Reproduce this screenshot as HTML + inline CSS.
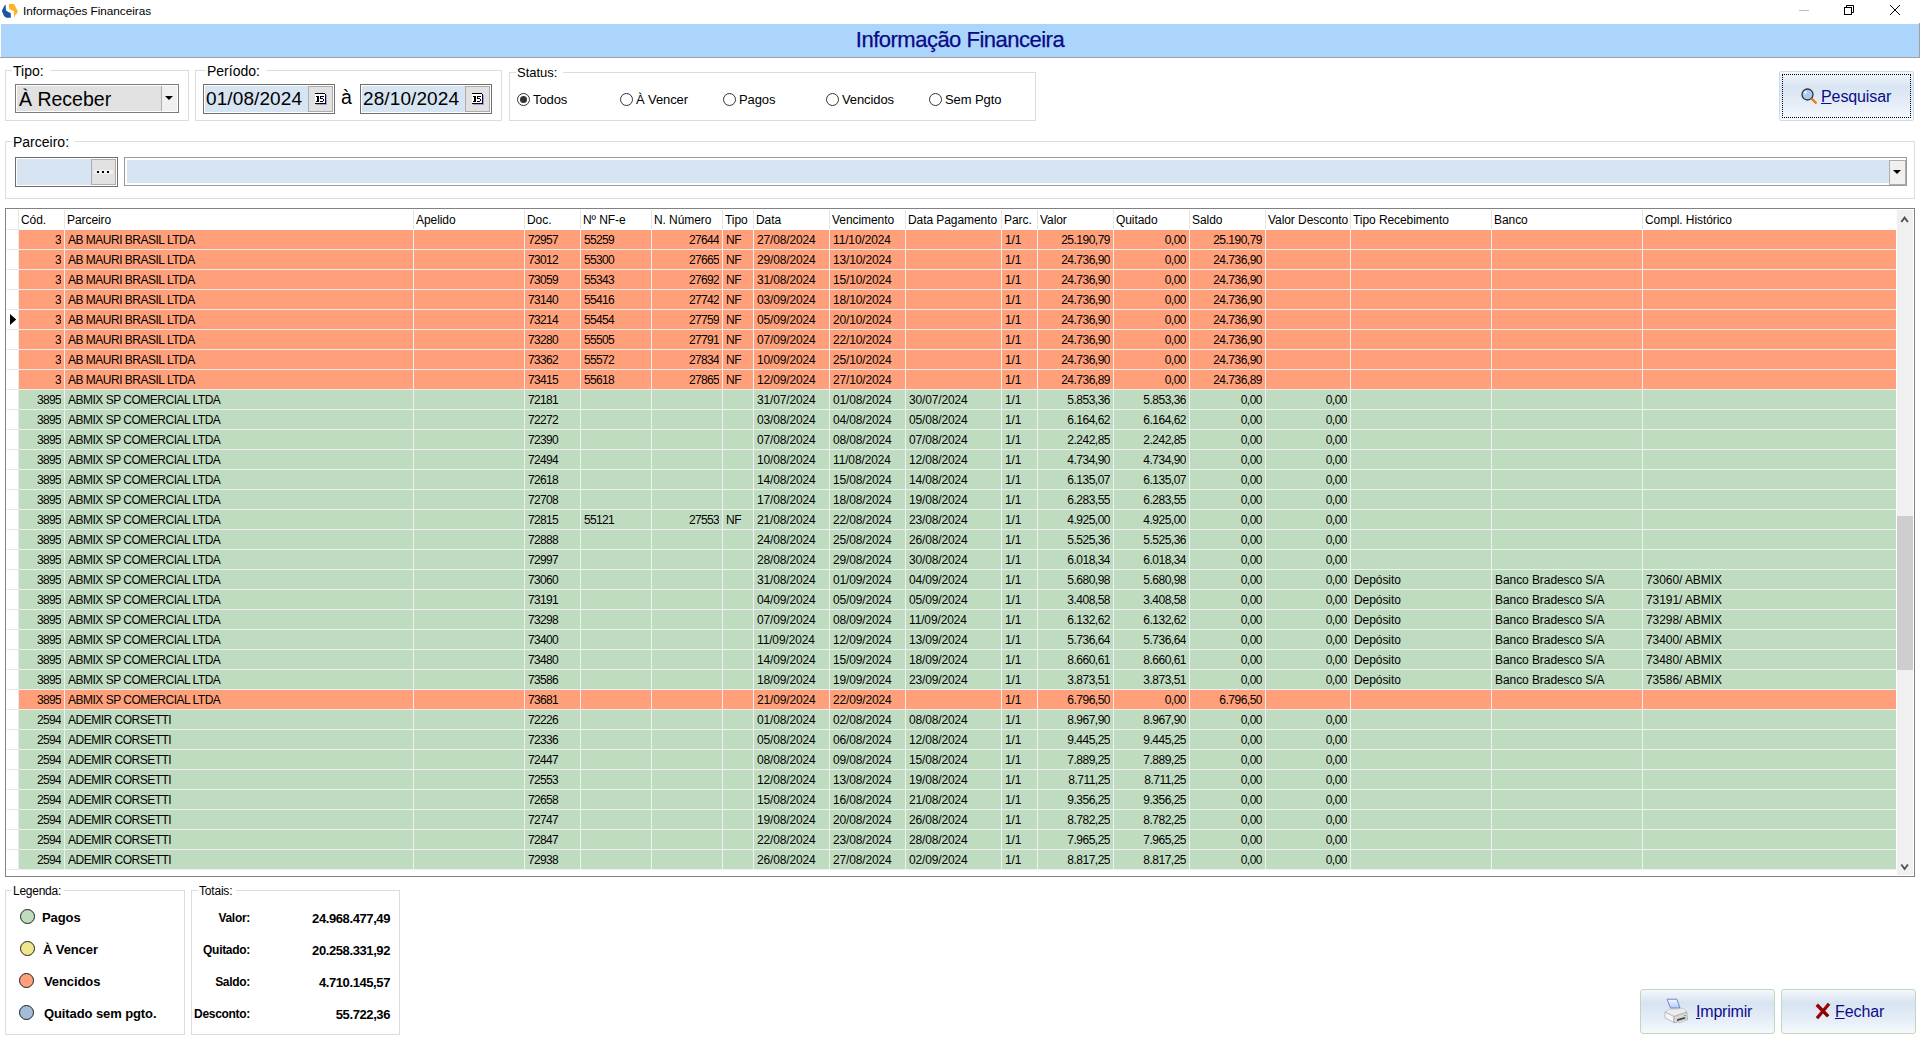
<!DOCTYPE html><html><head><meta charset="utf-8"><style>
*{margin:0;padding:0;box-sizing:border-box}
html,body{width:1920px;height:1040px;overflow:hidden;background:#fff;font-family:"Liberation Sans",sans-serif;color:#000;position:relative}
.a{position:absolute}
.t{position:absolute;white-space:nowrap;line-height:1}
.gb{position:absolute;border:1px solid #dcdcdc}
.gl{position:absolute;background:#fff;white-space:nowrap;line-height:1;padding:0 6px 0 1px}
.grid{position:absolute;left:5px;top:208px;width:1910px;height:669px;border:1px solid #828282;background:#fff;overflow:hidden}
.cell{position:absolute;height:19px;white-space:nowrap;overflow:hidden;font-size:12px;line-height:19px}
.hd{position:absolute;top:1px;height:20px;white-space:nowrap;overflow:hidden;font-size:12px;line-height:20px;letter-spacing:-0.07px}
.radio{position:absolute;width:13px;height:13px;border:1px solid #333;border-radius:50%;background:#fff}
</style></head><body>
<svg class="a" style="left:0;top:0" width="20" height="20" viewBox="0 0 20 20">
<path d="M5.7 4.6 L4.2 6 L3.2 8 L2 10.5 L2.2 12 L3 13.5 L4 16 L6.3 17.8 L10.8 17.8 L10.8 13.2 L8.5 12 L6.2 10.8 L5.8 9 Z" fill="#1a56a0"/>
<path d="M9 4 L13.8 4 L15 5.5 L16 8 L17.8 11 L17 13.5 L15.2 15 L14.8 16.8 L14 16.8 L14 11.5 L12 10.2 L10 9.6 L9 8.5 Z" fill="#fbb424"/>
</svg>
<div class="t" style="left:23px;top:6px;font-size:11.8px;letter-spacing:-0.05px;color:#000">Informações Financeiras</div>
<div class="a" style="left:1799px;top:10px;width:10px;height:1px;background:#bbb"></div>
<svg class="a" style="left:1843px;top:4px" width="12" height="12" viewBox="0 0 12 12"><rect x="1.5" y="3.5" width="7" height="7" fill="none" stroke="#000"/><path d="M3.5 3.5 V1.5 H10.5 V8.5 H8.5" fill="none" stroke="#000"/></svg>
<svg class="a" style="left:1889px;top:4px" width="12" height="12" viewBox="0 0 12 12"><path d="M1 1 L11 11 M11 1 L1 11" stroke="#000" stroke-width="1"/></svg>
<div class="a" style="left:1px;top:24px;width:1918px;height:33px;background:#acd5fb"></div>
<div class="a" style="left:0;top:57px;width:1920px;height:1px;background:#a0a0a0"></div>
<div class="a" style="left:1919px;top:23px;width:1px;height:35px;background:#a0a0a0"></div>
<div class="t" style="left:0;width:1920px;text-align:center;top:29px;font-size:22px;letter-spacing:-0.5px;color:#0a0a86;-webkit-text-stroke:0.25px #0a0a86">Informação Financeira</div>
<div class="gb" style="left:5px;top:70px;width:184px;height:51px"></div>
<div class="gl" style="left:12px;top:64px;font-size:14px">Tipo:</div>
<div class="a" style="left:15px;top:84px;width:164px;height:29px;border:1px solid #7a7a7a;background:#fff;padding:1px"><div style="width:100%;height:100%;background:#e1e1e1"></div></div>
<div class="a" style="left:161px;top:86px;width:16px;height:25px;background:#f0f0f0;border-left:1px solid #adadad"></div>
<svg class="a" style="left:165px;top:96px" width="9" height="5" viewBox="0 0 9 5"><path d="M0 0 H8 L4 4 Z" fill="#000"/></svg>
<div class="t" style="left:19px;top:90px;font-size:19.5px">À Receber</div>
<div class="gb" style="left:195px;top:70px;width:307px;height:51px"></div>
<div class="gl" style="left:206px;top:64px;font-size:14px">Período:</div>
<div class="a" style="left:203px;top:84px;width:132px;height:30px;border:1px solid #6e6e6e;background:#fff;padding:1px"><div style="width:100%;height:100%;background:#d7e4f2"></div></div>
<div class="a" style="left:308px;top:86px;width:25px;height:26px;background:#e1e1e1;border:1px solid #adadad"></div>
<svg class="a" style="left:315px;top:93px" width="13" height="13" viewBox="0 0 13 13" shape-rendering="crispEdges"><rect x="11" y="2" width="1" height="10" fill="#a8a8a8"/><rect x="1" y="11" width="11" height="1" fill="#a8a8a8"/><rect x="0" y="1" width="10" height="9" fill="#fff"/><rect x="0" y="0" width="10" height="1" fill="#000"/><rect x="10" y="1" width="1" height="10" fill="#00008b"/><rect x="0" y="10" width="11" height="1" fill="#000"/><rect x="2" y="10" width="1" height="1" fill="#00008b"/><rect x="4" y="10" width="1" height="1" fill="#00008b"/><rect x="6" y="10" width="1" height="1" fill="#00008b"/><rect x="8" y="10" width="1" height="1" fill="#00008b"/>
<rect x="1" y="3" width="1" height="1" fill="#000"/><rect x="2" y="3" width="2" height="6" fill="#000"/><rect x="1" y="8" width="3" height="1" fill="#000"/>
<rect x="5" y="3" width="4" height="1" fill="#000"/><rect x="5" y="4" width="1" height="2" fill="#000"/><rect x="5" y="5" width="3" height="1" fill="#000"/><rect x="8" y="6" width="1" height="2" fill="#000"/><rect x="5" y="8" width="3" height="1" fill="#000"/></svg>
<div class="t" style="left:206px;top:89px;font-size:19px;letter-spacing:0.1px">01/08/2024</div>
<div class="a" style="left:360px;top:84px;width:132px;height:30px;border:1px solid #6e6e6e;background:#fff;padding:1px"><div style="width:100%;height:100%;background:#d7e4f2"></div></div>
<div class="a" style="left:465px;top:86px;width:25px;height:26px;background:#e1e1e1;border:1px solid #adadad"></div>
<svg class="a" style="left:472px;top:93px" width="13" height="13" viewBox="0 0 13 13" shape-rendering="crispEdges"><rect x="11" y="2" width="1" height="10" fill="#a8a8a8"/><rect x="1" y="11" width="11" height="1" fill="#a8a8a8"/><rect x="0" y="1" width="10" height="9" fill="#fff"/><rect x="0" y="0" width="10" height="1" fill="#000"/><rect x="10" y="1" width="1" height="10" fill="#00008b"/><rect x="0" y="10" width="11" height="1" fill="#000"/><rect x="2" y="10" width="1" height="1" fill="#00008b"/><rect x="4" y="10" width="1" height="1" fill="#00008b"/><rect x="6" y="10" width="1" height="1" fill="#00008b"/><rect x="8" y="10" width="1" height="1" fill="#00008b"/>
<rect x="1" y="3" width="1" height="1" fill="#000"/><rect x="2" y="3" width="2" height="6" fill="#000"/><rect x="1" y="8" width="3" height="1" fill="#000"/>
<rect x="5" y="3" width="4" height="1" fill="#000"/><rect x="5" y="4" width="1" height="2" fill="#000"/><rect x="5" y="5" width="3" height="1" fill="#000"/><rect x="8" y="6" width="1" height="2" fill="#000"/><rect x="5" y="8" width="3" height="1" fill="#000"/></svg>
<div class="t" style="left:363px;top:89px;font-size:19px;letter-spacing:0.1px">28/10/2024</div>
<div class="t" style="left:341px;top:88px;font-size:19.5px">à</div>
<div class="gb" style="left:509px;top:72px;width:527px;height:49px"></div>
<div class="gl" style="left:516px;top:66px;font-size:13px">Status:</div>
<div class="radio" style="left:517px;top:93px"></div>
<div class="a" style="left:520px;top:96px;width:7px;height:7px;border-radius:50%;background:#333"></div>
<div class="t" style="left:533px;top:93px;font-size:13px;letter-spacing:-0.1px">Todos</div>
<div class="radio" style="left:620px;top:93px"></div>
<div class="t" style="left:636px;top:93px;font-size:13px;letter-spacing:-0.1px">À Vencer</div>
<div class="radio" style="left:723px;top:93px"></div>
<div class="t" style="left:739px;top:93px;font-size:13px;letter-spacing:-0.1px">Pagos</div>
<div class="radio" style="left:826px;top:93px"></div>
<div class="t" style="left:842px;top:93px;font-size:13px;letter-spacing:-0.1px">Vencidos</div>
<div class="radio" style="left:929px;top:93px"></div>
<div class="t" style="left:945px;top:93px;font-size:13px;letter-spacing:-0.1px">Sem Pgto</div>
<div class="a" style="left:1779px;top:71px;width:135px;height:50px;border:1px solid #c9dcf2;border-radius:2px;background:linear-gradient(#f5f8fc 0%,#d9e5f3 30%,#e3ebf6 60%,#f6f9fd 100%)"></div>
<div class="a" style="left:1782px;top:74px;width:129px;height:44px;border:1px dotted #000"></div>
<svg class="a" style="left:1800px;top:87px" width="20" height="20" viewBox="0 0 20 20"><circle cx="7.5" cy="7.5" r="5.5" fill="#a9cdf2" stroke="#333" stroke-width="1.3"/><circle cx="5.5" cy="5.5" r="1.2" fill="#fff"/><path d="M11.5 11.5 L16.5 16.5" stroke="#e07b10" stroke-width="2.2"/></svg>
<div class="t" style="left:1821px;top:89px;font-size:16px;color:#0c0c8a;letter-spacing:-0.1px"><span style="text-decoration:underline">P</span>esquisar</div>
<div class="gb" style="left:5px;top:141px;width:1910px;height:58px"></div>
<div class="gl" style="left:12px;top:135px;font-size:14px">Parceiro:</div>
<div class="a" style="left:15px;top:157px;width:103px;height:30px;border:1px solid #6e6e6e;background:#fff;padding:1px"><div style="width:100%;height:100%;background:#d7e4f2"></div></div>
<div class="a" style="left:91px;top:159px;width:25px;height:26px;background:#e1e1e1;border:1px solid #adadad"></div>
<div class="a" style="left:94px;top:170px;width:19px;height:4px;background:#f0f0f0"></div>
<div class="a" style="left:97px;top:171px;width:2px;height:2px;background:#000"></div>
<div class="a" style="left:102px;top:171px;width:2px;height:2px;background:#000"></div>
<div class="a" style="left:107px;top:171px;width:2px;height:2px;background:#000"></div>
<div class="a" style="left:124px;top:157px;width:1783px;height:29px;border:1px solid #9a9a9a;background:#fff;padding:2px"><div style="width:100%;height:100%;background:#d7e4f2"></div></div>
<div class="a" style="left:1889px;top:160px;width:17px;height:25px;background:#f0f0f0;border:1px solid #adadad"></div>
<svg class="a" style="left:1893px;top:170px" width="9" height="5" viewBox="0 0 9 5"><path d="M0 0 H8 L4 4 Z" fill="#000"/></svg>
<div class="grid">
<div class="a" style="left:12px;top:1px;width:1px;height:19px;background:#e5e5e5"></div>
<div class="a" style="left:58px;top:1px;width:1px;height:19px;background:#e5e5e5"></div>
<div class="a" style="left:407px;top:1px;width:1px;height:19px;background:#e5e5e5"></div>
<div class="a" style="left:518px;top:1px;width:1px;height:19px;background:#e5e5e5"></div>
<div class="a" style="left:574px;top:1px;width:1px;height:19px;background:#e5e5e5"></div>
<div class="a" style="left:645px;top:1px;width:1px;height:19px;background:#e5e5e5"></div>
<div class="a" style="left:716px;top:1px;width:1px;height:19px;background:#e5e5e5"></div>
<div class="a" style="left:747px;top:1px;width:1px;height:19px;background:#e5e5e5"></div>
<div class="a" style="left:823px;top:1px;width:1px;height:19px;background:#e5e5e5"></div>
<div class="a" style="left:899px;top:1px;width:1px;height:19px;background:#e5e5e5"></div>
<div class="a" style="left:995px;top:1px;width:1px;height:19px;background:#e5e5e5"></div>
<div class="a" style="left:1031px;top:1px;width:1px;height:19px;background:#e5e5e5"></div>
<div class="a" style="left:1107px;top:1px;width:1px;height:19px;background:#e5e5e5"></div>
<div class="a" style="left:1183px;top:1px;width:1px;height:19px;background:#e5e5e5"></div>
<div class="a" style="left:1259px;top:1px;width:1px;height:19px;background:#e5e5e5"></div>
<div class="a" style="left:1344px;top:1px;width:1px;height:19px;background:#e5e5e5"></div>
<div class="a" style="left:1485px;top:1px;width:1px;height:19px;background:#e5e5e5"></div>
<div class="a" style="left:1636px;top:1px;width:1px;height:19px;background:#e5e5e5"></div>
<div class="hd" style="left:15px;width:43px">Cód.</div>
<div class="hd" style="left:61px;width:346px">Parceiro</div>
<div class="hd" style="left:410px;width:108px">Apelido</div>
<div class="hd" style="left:521px;width:53px">Doc.</div>
<div class="hd" style="left:577px;width:68px">Nº NF-e</div>
<div class="hd" style="left:648px;width:68px">N. Número</div>
<div class="hd" style="left:719px;width:28px">Tipo</div>
<div class="hd" style="left:750px;width:73px">Data</div>
<div class="hd" style="left:826px;width:73px">Vencimento</div>
<div class="hd" style="left:902px;width:93px">Data Pagamento</div>
<div class="hd" style="left:998px;width:33px">Parc.</div>
<div class="hd" style="left:1034px;width:73px">Valor</div>
<div class="hd" style="left:1110px;width:73px">Quitado</div>
<div class="hd" style="left:1186px;width:73px">Saldo</div>
<div class="hd" style="left:1262px;width:82px">Valor Desconto</div>
<div class="hd" style="left:1347px;width:138px">Tipo Recebimento</div>
<div class="hd" style="left:1488px;width:148px">Banco</div>
<div class="hd" style="left:1639px;width:251px">Compl. Histórico</div>
<div class="a" style="left:1px;top:20px;width:12px;height:1px;background:#e5e5e5"></div>
<div class="a" style="left:1px;top:40px;width:12px;height:1px;background:#e5e5e5"></div>
<div class="a" style="left:13px;top:21px;width:1877px;height:19px;background:#ffa07a"></div>
<div class="a" style="left:13px;top:40px;width:1877px;height:1px;background:#f0f0f0"></div>
<div class="cell" style="left:13px;top:22px;width:42px;text-align:right;letter-spacing:-0.67px">3</div>
<div class="cell" style="left:62px;top:22px;width:345px;letter-spacing:-0.5px">AB MAURI BRASIL LTDA</div>
<div class="cell" style="left:522px;top:22px;width:52px;letter-spacing:-0.67px">72957</div>
<div class="cell" style="left:578px;top:22px;width:67px;letter-spacing:-0.67px">55259</div>
<div class="cell" style="left:646px;top:22px;width:67px;text-align:right;letter-spacing:-0.67px">27644</div>
<div class="cell" style="left:720px;top:22px;width:27px;letter-spacing:-0.5px">NF</div>
<div class="cell" style="left:751px;top:22px;width:72px;letter-spacing:-0.14px">27/08/2024</div>
<div class="cell" style="left:827px;top:22px;width:72px;letter-spacing:-0.14px">11/10/2024</div>
<div class="cell" style="left:999px;top:22px;width:32px;letter-spacing:-0.07px">1/1</div>
<div class="cell" style="left:1032px;top:22px;width:72px;text-align:right;letter-spacing:-0.51px">25.190,79</div>
<div class="cell" style="left:1108px;top:22px;width:72px;text-align:right;letter-spacing:-0.51px">0,00</div>
<div class="cell" style="left:1184px;top:22px;width:72px;text-align:right;letter-spacing:-0.51px">25.190,79</div>
<div class="a" style="left:1px;top:60px;width:12px;height:1px;background:#e5e5e5"></div>
<div class="a" style="left:13px;top:41px;width:1877px;height:19px;background:#ffa07a"></div>
<div class="a" style="left:13px;top:60px;width:1877px;height:1px;background:#f0f0f0"></div>
<div class="cell" style="left:13px;top:42px;width:42px;text-align:right;letter-spacing:-0.67px">3</div>
<div class="cell" style="left:62px;top:42px;width:345px;letter-spacing:-0.5px">AB MAURI BRASIL LTDA</div>
<div class="cell" style="left:522px;top:42px;width:52px;letter-spacing:-0.67px">73012</div>
<div class="cell" style="left:578px;top:42px;width:67px;letter-spacing:-0.67px">55300</div>
<div class="cell" style="left:646px;top:42px;width:67px;text-align:right;letter-spacing:-0.67px">27665</div>
<div class="cell" style="left:720px;top:42px;width:27px;letter-spacing:-0.5px">NF</div>
<div class="cell" style="left:751px;top:42px;width:72px;letter-spacing:-0.14px">29/08/2024</div>
<div class="cell" style="left:827px;top:42px;width:72px;letter-spacing:-0.14px">13/10/2024</div>
<div class="cell" style="left:999px;top:42px;width:32px;letter-spacing:-0.07px">1/1</div>
<div class="cell" style="left:1032px;top:42px;width:72px;text-align:right;letter-spacing:-0.51px">24.736,90</div>
<div class="cell" style="left:1108px;top:42px;width:72px;text-align:right;letter-spacing:-0.51px">0,00</div>
<div class="cell" style="left:1184px;top:42px;width:72px;text-align:right;letter-spacing:-0.51px">24.736,90</div>
<div class="a" style="left:1px;top:80px;width:12px;height:1px;background:#e5e5e5"></div>
<div class="a" style="left:13px;top:61px;width:1877px;height:19px;background:#ffa07a"></div>
<div class="a" style="left:13px;top:80px;width:1877px;height:1px;background:#f0f0f0"></div>
<div class="cell" style="left:13px;top:62px;width:42px;text-align:right;letter-spacing:-0.67px">3</div>
<div class="cell" style="left:62px;top:62px;width:345px;letter-spacing:-0.5px">AB MAURI BRASIL LTDA</div>
<div class="cell" style="left:522px;top:62px;width:52px;letter-spacing:-0.67px">73059</div>
<div class="cell" style="left:578px;top:62px;width:67px;letter-spacing:-0.67px">55343</div>
<div class="cell" style="left:646px;top:62px;width:67px;text-align:right;letter-spacing:-0.67px">27692</div>
<div class="cell" style="left:720px;top:62px;width:27px;letter-spacing:-0.5px">NF</div>
<div class="cell" style="left:751px;top:62px;width:72px;letter-spacing:-0.14px">31/08/2024</div>
<div class="cell" style="left:827px;top:62px;width:72px;letter-spacing:-0.14px">15/10/2024</div>
<div class="cell" style="left:999px;top:62px;width:32px;letter-spacing:-0.07px">1/1</div>
<div class="cell" style="left:1032px;top:62px;width:72px;text-align:right;letter-spacing:-0.51px">24.736,90</div>
<div class="cell" style="left:1108px;top:62px;width:72px;text-align:right;letter-spacing:-0.51px">0,00</div>
<div class="cell" style="left:1184px;top:62px;width:72px;text-align:right;letter-spacing:-0.51px">24.736,90</div>
<div class="a" style="left:1px;top:100px;width:12px;height:1px;background:#e5e5e5"></div>
<div class="a" style="left:13px;top:81px;width:1877px;height:19px;background:#ffa07a"></div>
<div class="a" style="left:13px;top:100px;width:1877px;height:1px;background:#f0f0f0"></div>
<div class="cell" style="left:13px;top:82px;width:42px;text-align:right;letter-spacing:-0.67px">3</div>
<div class="cell" style="left:62px;top:82px;width:345px;letter-spacing:-0.5px">AB MAURI BRASIL LTDA</div>
<div class="cell" style="left:522px;top:82px;width:52px;letter-spacing:-0.67px">73140</div>
<div class="cell" style="left:578px;top:82px;width:67px;letter-spacing:-0.67px">55416</div>
<div class="cell" style="left:646px;top:82px;width:67px;text-align:right;letter-spacing:-0.67px">27742</div>
<div class="cell" style="left:720px;top:82px;width:27px;letter-spacing:-0.5px">NF</div>
<div class="cell" style="left:751px;top:82px;width:72px;letter-spacing:-0.14px">03/09/2024</div>
<div class="cell" style="left:827px;top:82px;width:72px;letter-spacing:-0.14px">18/10/2024</div>
<div class="cell" style="left:999px;top:82px;width:32px;letter-spacing:-0.07px">1/1</div>
<div class="cell" style="left:1032px;top:82px;width:72px;text-align:right;letter-spacing:-0.51px">24.736,90</div>
<div class="cell" style="left:1108px;top:82px;width:72px;text-align:right;letter-spacing:-0.51px">0,00</div>
<div class="cell" style="left:1184px;top:82px;width:72px;text-align:right;letter-spacing:-0.51px">24.736,90</div>
<div class="a" style="left:1px;top:120px;width:12px;height:1px;background:#e5e5e5"></div>
<div class="a" style="left:13px;top:101px;width:1877px;height:19px;background:#ffa07a"></div>
<div class="a" style="left:13px;top:120px;width:1877px;height:1px;background:#f0f0f0"></div>
<div class="cell" style="left:13px;top:102px;width:42px;text-align:right;letter-spacing:-0.67px">3</div>
<div class="cell" style="left:62px;top:102px;width:345px;letter-spacing:-0.5px">AB MAURI BRASIL LTDA</div>
<div class="cell" style="left:522px;top:102px;width:52px;letter-spacing:-0.67px">73214</div>
<div class="cell" style="left:578px;top:102px;width:67px;letter-spacing:-0.67px">55454</div>
<div class="cell" style="left:646px;top:102px;width:67px;text-align:right;letter-spacing:-0.67px">27759</div>
<div class="cell" style="left:720px;top:102px;width:27px;letter-spacing:-0.5px">NF</div>
<div class="cell" style="left:751px;top:102px;width:72px;letter-spacing:-0.14px">05/09/2024</div>
<div class="cell" style="left:827px;top:102px;width:72px;letter-spacing:-0.14px">20/10/2024</div>
<div class="cell" style="left:999px;top:102px;width:32px;letter-spacing:-0.07px">1/1</div>
<div class="cell" style="left:1032px;top:102px;width:72px;text-align:right;letter-spacing:-0.51px">24.736,90</div>
<div class="cell" style="left:1108px;top:102px;width:72px;text-align:right;letter-spacing:-0.51px">0,00</div>
<div class="cell" style="left:1184px;top:102px;width:72px;text-align:right;letter-spacing:-0.51px">24.736,90</div>
<div class="a" style="left:1px;top:140px;width:12px;height:1px;background:#e5e5e5"></div>
<div class="a" style="left:13px;top:121px;width:1877px;height:19px;background:#ffa07a"></div>
<div class="a" style="left:13px;top:140px;width:1877px;height:1px;background:#f0f0f0"></div>
<div class="cell" style="left:13px;top:122px;width:42px;text-align:right;letter-spacing:-0.67px">3</div>
<div class="cell" style="left:62px;top:122px;width:345px;letter-spacing:-0.5px">AB MAURI BRASIL LTDA</div>
<div class="cell" style="left:522px;top:122px;width:52px;letter-spacing:-0.67px">73280</div>
<div class="cell" style="left:578px;top:122px;width:67px;letter-spacing:-0.67px">55505</div>
<div class="cell" style="left:646px;top:122px;width:67px;text-align:right;letter-spacing:-0.67px">27791</div>
<div class="cell" style="left:720px;top:122px;width:27px;letter-spacing:-0.5px">NF</div>
<div class="cell" style="left:751px;top:122px;width:72px;letter-spacing:-0.14px">07/09/2024</div>
<div class="cell" style="left:827px;top:122px;width:72px;letter-spacing:-0.14px">22/10/2024</div>
<div class="cell" style="left:999px;top:122px;width:32px;letter-spacing:-0.07px">1/1</div>
<div class="cell" style="left:1032px;top:122px;width:72px;text-align:right;letter-spacing:-0.51px">24.736,90</div>
<div class="cell" style="left:1108px;top:122px;width:72px;text-align:right;letter-spacing:-0.51px">0,00</div>
<div class="cell" style="left:1184px;top:122px;width:72px;text-align:right;letter-spacing:-0.51px">24.736,90</div>
<div class="a" style="left:1px;top:160px;width:12px;height:1px;background:#e5e5e5"></div>
<div class="a" style="left:13px;top:141px;width:1877px;height:19px;background:#ffa07a"></div>
<div class="a" style="left:13px;top:160px;width:1877px;height:1px;background:#f0f0f0"></div>
<div class="cell" style="left:13px;top:142px;width:42px;text-align:right;letter-spacing:-0.67px">3</div>
<div class="cell" style="left:62px;top:142px;width:345px;letter-spacing:-0.5px">AB MAURI BRASIL LTDA</div>
<div class="cell" style="left:522px;top:142px;width:52px;letter-spacing:-0.67px">73362</div>
<div class="cell" style="left:578px;top:142px;width:67px;letter-spacing:-0.67px">55572</div>
<div class="cell" style="left:646px;top:142px;width:67px;text-align:right;letter-spacing:-0.67px">27834</div>
<div class="cell" style="left:720px;top:142px;width:27px;letter-spacing:-0.5px">NF</div>
<div class="cell" style="left:751px;top:142px;width:72px;letter-spacing:-0.14px">10/09/2024</div>
<div class="cell" style="left:827px;top:142px;width:72px;letter-spacing:-0.14px">25/10/2024</div>
<div class="cell" style="left:999px;top:142px;width:32px;letter-spacing:-0.07px">1/1</div>
<div class="cell" style="left:1032px;top:142px;width:72px;text-align:right;letter-spacing:-0.51px">24.736,90</div>
<div class="cell" style="left:1108px;top:142px;width:72px;text-align:right;letter-spacing:-0.51px">0,00</div>
<div class="cell" style="left:1184px;top:142px;width:72px;text-align:right;letter-spacing:-0.51px">24.736,90</div>
<div class="a" style="left:1px;top:180px;width:12px;height:1px;background:#e5e5e5"></div>
<div class="a" style="left:13px;top:161px;width:1877px;height:19px;background:#ffa07a"></div>
<div class="a" style="left:13px;top:180px;width:1877px;height:1px;background:#f0f0f0"></div>
<div class="cell" style="left:13px;top:162px;width:42px;text-align:right;letter-spacing:-0.67px">3</div>
<div class="cell" style="left:62px;top:162px;width:345px;letter-spacing:-0.5px">AB MAURI BRASIL LTDA</div>
<div class="cell" style="left:522px;top:162px;width:52px;letter-spacing:-0.67px">73415</div>
<div class="cell" style="left:578px;top:162px;width:67px;letter-spacing:-0.67px">55618</div>
<div class="cell" style="left:646px;top:162px;width:67px;text-align:right;letter-spacing:-0.67px">27865</div>
<div class="cell" style="left:720px;top:162px;width:27px;letter-spacing:-0.5px">NF</div>
<div class="cell" style="left:751px;top:162px;width:72px;letter-spacing:-0.14px">12/09/2024</div>
<div class="cell" style="left:827px;top:162px;width:72px;letter-spacing:-0.14px">27/10/2024</div>
<div class="cell" style="left:999px;top:162px;width:32px;letter-spacing:-0.07px">1/1</div>
<div class="cell" style="left:1032px;top:162px;width:72px;text-align:right;letter-spacing:-0.51px">24.736,89</div>
<div class="cell" style="left:1108px;top:162px;width:72px;text-align:right;letter-spacing:-0.51px">0,00</div>
<div class="cell" style="left:1184px;top:162px;width:72px;text-align:right;letter-spacing:-0.51px">24.736,89</div>
<div class="a" style="left:1px;top:200px;width:12px;height:1px;background:#e5e5e5"></div>
<div class="a" style="left:13px;top:181px;width:1877px;height:19px;background:#c0dcc0"></div>
<div class="a" style="left:13px;top:200px;width:1877px;height:1px;background:#f0f0f0"></div>
<div class="cell" style="left:13px;top:182px;width:42px;text-align:right;letter-spacing:-0.67px">3895</div>
<div class="cell" style="left:62px;top:182px;width:345px;letter-spacing:-0.5px">ABMIX SP COMERCIAL LTDA</div>
<div class="cell" style="left:522px;top:182px;width:52px;letter-spacing:-0.67px">72181</div>
<div class="cell" style="left:751px;top:182px;width:72px;letter-spacing:-0.14px">31/07/2024</div>
<div class="cell" style="left:827px;top:182px;width:72px;letter-spacing:-0.14px">01/08/2024</div>
<div class="cell" style="left:903px;top:182px;width:92px;letter-spacing:-0.14px">30/07/2024</div>
<div class="cell" style="left:999px;top:182px;width:32px;letter-spacing:-0.07px">1/1</div>
<div class="cell" style="left:1032px;top:182px;width:72px;text-align:right;letter-spacing:-0.51px">5.853,36</div>
<div class="cell" style="left:1108px;top:182px;width:72px;text-align:right;letter-spacing:-0.51px">5.853,36</div>
<div class="cell" style="left:1184px;top:182px;width:72px;text-align:right;letter-spacing:-0.51px">0,00</div>
<div class="cell" style="left:1260px;top:182px;width:81px;text-align:right;letter-spacing:-0.51px">0,00</div>
<div class="a" style="left:1px;top:220px;width:12px;height:1px;background:#e5e5e5"></div>
<div class="a" style="left:13px;top:201px;width:1877px;height:19px;background:#c0dcc0"></div>
<div class="a" style="left:13px;top:220px;width:1877px;height:1px;background:#f0f0f0"></div>
<div class="cell" style="left:13px;top:202px;width:42px;text-align:right;letter-spacing:-0.67px">3895</div>
<div class="cell" style="left:62px;top:202px;width:345px;letter-spacing:-0.5px">ABMIX SP COMERCIAL LTDA</div>
<div class="cell" style="left:522px;top:202px;width:52px;letter-spacing:-0.67px">72272</div>
<div class="cell" style="left:751px;top:202px;width:72px;letter-spacing:-0.14px">03/08/2024</div>
<div class="cell" style="left:827px;top:202px;width:72px;letter-spacing:-0.14px">04/08/2024</div>
<div class="cell" style="left:903px;top:202px;width:92px;letter-spacing:-0.14px">05/08/2024</div>
<div class="cell" style="left:999px;top:202px;width:32px;letter-spacing:-0.07px">1/1</div>
<div class="cell" style="left:1032px;top:202px;width:72px;text-align:right;letter-spacing:-0.51px">6.164,62</div>
<div class="cell" style="left:1108px;top:202px;width:72px;text-align:right;letter-spacing:-0.51px">6.164,62</div>
<div class="cell" style="left:1184px;top:202px;width:72px;text-align:right;letter-spacing:-0.51px">0,00</div>
<div class="cell" style="left:1260px;top:202px;width:81px;text-align:right;letter-spacing:-0.51px">0,00</div>
<div class="a" style="left:1px;top:240px;width:12px;height:1px;background:#e5e5e5"></div>
<div class="a" style="left:13px;top:221px;width:1877px;height:19px;background:#c0dcc0"></div>
<div class="a" style="left:13px;top:240px;width:1877px;height:1px;background:#f0f0f0"></div>
<div class="cell" style="left:13px;top:222px;width:42px;text-align:right;letter-spacing:-0.67px">3895</div>
<div class="cell" style="left:62px;top:222px;width:345px;letter-spacing:-0.5px">ABMIX SP COMERCIAL LTDA</div>
<div class="cell" style="left:522px;top:222px;width:52px;letter-spacing:-0.67px">72390</div>
<div class="cell" style="left:751px;top:222px;width:72px;letter-spacing:-0.14px">07/08/2024</div>
<div class="cell" style="left:827px;top:222px;width:72px;letter-spacing:-0.14px">08/08/2024</div>
<div class="cell" style="left:903px;top:222px;width:92px;letter-spacing:-0.14px">07/08/2024</div>
<div class="cell" style="left:999px;top:222px;width:32px;letter-spacing:-0.07px">1/1</div>
<div class="cell" style="left:1032px;top:222px;width:72px;text-align:right;letter-spacing:-0.51px">2.242,85</div>
<div class="cell" style="left:1108px;top:222px;width:72px;text-align:right;letter-spacing:-0.51px">2.242,85</div>
<div class="cell" style="left:1184px;top:222px;width:72px;text-align:right;letter-spacing:-0.51px">0,00</div>
<div class="cell" style="left:1260px;top:222px;width:81px;text-align:right;letter-spacing:-0.51px">0,00</div>
<div class="a" style="left:1px;top:260px;width:12px;height:1px;background:#e5e5e5"></div>
<div class="a" style="left:13px;top:241px;width:1877px;height:19px;background:#c0dcc0"></div>
<div class="a" style="left:13px;top:260px;width:1877px;height:1px;background:#f0f0f0"></div>
<div class="cell" style="left:13px;top:242px;width:42px;text-align:right;letter-spacing:-0.67px">3895</div>
<div class="cell" style="left:62px;top:242px;width:345px;letter-spacing:-0.5px">ABMIX SP COMERCIAL LTDA</div>
<div class="cell" style="left:522px;top:242px;width:52px;letter-spacing:-0.67px">72494</div>
<div class="cell" style="left:751px;top:242px;width:72px;letter-spacing:-0.14px">10/08/2024</div>
<div class="cell" style="left:827px;top:242px;width:72px;letter-spacing:-0.14px">11/08/2024</div>
<div class="cell" style="left:903px;top:242px;width:92px;letter-spacing:-0.14px">12/08/2024</div>
<div class="cell" style="left:999px;top:242px;width:32px;letter-spacing:-0.07px">1/1</div>
<div class="cell" style="left:1032px;top:242px;width:72px;text-align:right;letter-spacing:-0.51px">4.734,90</div>
<div class="cell" style="left:1108px;top:242px;width:72px;text-align:right;letter-spacing:-0.51px">4.734,90</div>
<div class="cell" style="left:1184px;top:242px;width:72px;text-align:right;letter-spacing:-0.51px">0,00</div>
<div class="cell" style="left:1260px;top:242px;width:81px;text-align:right;letter-spacing:-0.51px">0,00</div>
<div class="a" style="left:1px;top:280px;width:12px;height:1px;background:#e5e5e5"></div>
<div class="a" style="left:13px;top:261px;width:1877px;height:19px;background:#c0dcc0"></div>
<div class="a" style="left:13px;top:280px;width:1877px;height:1px;background:#f0f0f0"></div>
<div class="cell" style="left:13px;top:262px;width:42px;text-align:right;letter-spacing:-0.67px">3895</div>
<div class="cell" style="left:62px;top:262px;width:345px;letter-spacing:-0.5px">ABMIX SP COMERCIAL LTDA</div>
<div class="cell" style="left:522px;top:262px;width:52px;letter-spacing:-0.67px">72618</div>
<div class="cell" style="left:751px;top:262px;width:72px;letter-spacing:-0.14px">14/08/2024</div>
<div class="cell" style="left:827px;top:262px;width:72px;letter-spacing:-0.14px">15/08/2024</div>
<div class="cell" style="left:903px;top:262px;width:92px;letter-spacing:-0.14px">14/08/2024</div>
<div class="cell" style="left:999px;top:262px;width:32px;letter-spacing:-0.07px">1/1</div>
<div class="cell" style="left:1032px;top:262px;width:72px;text-align:right;letter-spacing:-0.51px">6.135,07</div>
<div class="cell" style="left:1108px;top:262px;width:72px;text-align:right;letter-spacing:-0.51px">6.135,07</div>
<div class="cell" style="left:1184px;top:262px;width:72px;text-align:right;letter-spacing:-0.51px">0,00</div>
<div class="cell" style="left:1260px;top:262px;width:81px;text-align:right;letter-spacing:-0.51px">0,00</div>
<div class="a" style="left:1px;top:300px;width:12px;height:1px;background:#e5e5e5"></div>
<div class="a" style="left:13px;top:281px;width:1877px;height:19px;background:#c0dcc0"></div>
<div class="a" style="left:13px;top:300px;width:1877px;height:1px;background:#f0f0f0"></div>
<div class="cell" style="left:13px;top:282px;width:42px;text-align:right;letter-spacing:-0.67px">3895</div>
<div class="cell" style="left:62px;top:282px;width:345px;letter-spacing:-0.5px">ABMIX SP COMERCIAL LTDA</div>
<div class="cell" style="left:522px;top:282px;width:52px;letter-spacing:-0.67px">72708</div>
<div class="cell" style="left:751px;top:282px;width:72px;letter-spacing:-0.14px">17/08/2024</div>
<div class="cell" style="left:827px;top:282px;width:72px;letter-spacing:-0.14px">18/08/2024</div>
<div class="cell" style="left:903px;top:282px;width:92px;letter-spacing:-0.14px">19/08/2024</div>
<div class="cell" style="left:999px;top:282px;width:32px;letter-spacing:-0.07px">1/1</div>
<div class="cell" style="left:1032px;top:282px;width:72px;text-align:right;letter-spacing:-0.51px">6.283,55</div>
<div class="cell" style="left:1108px;top:282px;width:72px;text-align:right;letter-spacing:-0.51px">6.283,55</div>
<div class="cell" style="left:1184px;top:282px;width:72px;text-align:right;letter-spacing:-0.51px">0,00</div>
<div class="cell" style="left:1260px;top:282px;width:81px;text-align:right;letter-spacing:-0.51px">0,00</div>
<div class="a" style="left:1px;top:320px;width:12px;height:1px;background:#e5e5e5"></div>
<div class="a" style="left:13px;top:301px;width:1877px;height:19px;background:#c0dcc0"></div>
<div class="a" style="left:13px;top:320px;width:1877px;height:1px;background:#f0f0f0"></div>
<div class="cell" style="left:13px;top:302px;width:42px;text-align:right;letter-spacing:-0.67px">3895</div>
<div class="cell" style="left:62px;top:302px;width:345px;letter-spacing:-0.5px">ABMIX SP COMERCIAL LTDA</div>
<div class="cell" style="left:522px;top:302px;width:52px;letter-spacing:-0.67px">72815</div>
<div class="cell" style="left:578px;top:302px;width:67px;letter-spacing:-0.67px">55121</div>
<div class="cell" style="left:646px;top:302px;width:67px;text-align:right;letter-spacing:-0.67px">27553</div>
<div class="cell" style="left:720px;top:302px;width:27px;letter-spacing:-0.5px">NF</div>
<div class="cell" style="left:751px;top:302px;width:72px;letter-spacing:-0.14px">21/08/2024</div>
<div class="cell" style="left:827px;top:302px;width:72px;letter-spacing:-0.14px">22/08/2024</div>
<div class="cell" style="left:903px;top:302px;width:92px;letter-spacing:-0.14px">23/08/2024</div>
<div class="cell" style="left:999px;top:302px;width:32px;letter-spacing:-0.07px">1/1</div>
<div class="cell" style="left:1032px;top:302px;width:72px;text-align:right;letter-spacing:-0.51px">4.925,00</div>
<div class="cell" style="left:1108px;top:302px;width:72px;text-align:right;letter-spacing:-0.51px">4.925,00</div>
<div class="cell" style="left:1184px;top:302px;width:72px;text-align:right;letter-spacing:-0.51px">0,00</div>
<div class="cell" style="left:1260px;top:302px;width:81px;text-align:right;letter-spacing:-0.51px">0,00</div>
<div class="a" style="left:1px;top:340px;width:12px;height:1px;background:#e5e5e5"></div>
<div class="a" style="left:13px;top:321px;width:1877px;height:19px;background:#c0dcc0"></div>
<div class="a" style="left:13px;top:340px;width:1877px;height:1px;background:#f0f0f0"></div>
<div class="cell" style="left:13px;top:322px;width:42px;text-align:right;letter-spacing:-0.67px">3895</div>
<div class="cell" style="left:62px;top:322px;width:345px;letter-spacing:-0.5px">ABMIX SP COMERCIAL LTDA</div>
<div class="cell" style="left:522px;top:322px;width:52px;letter-spacing:-0.67px">72888</div>
<div class="cell" style="left:751px;top:322px;width:72px;letter-spacing:-0.14px">24/08/2024</div>
<div class="cell" style="left:827px;top:322px;width:72px;letter-spacing:-0.14px">25/08/2024</div>
<div class="cell" style="left:903px;top:322px;width:92px;letter-spacing:-0.14px">26/08/2024</div>
<div class="cell" style="left:999px;top:322px;width:32px;letter-spacing:-0.07px">1/1</div>
<div class="cell" style="left:1032px;top:322px;width:72px;text-align:right;letter-spacing:-0.51px">5.525,36</div>
<div class="cell" style="left:1108px;top:322px;width:72px;text-align:right;letter-spacing:-0.51px">5.525,36</div>
<div class="cell" style="left:1184px;top:322px;width:72px;text-align:right;letter-spacing:-0.51px">0,00</div>
<div class="cell" style="left:1260px;top:322px;width:81px;text-align:right;letter-spacing:-0.51px">0,00</div>
<div class="a" style="left:1px;top:360px;width:12px;height:1px;background:#e5e5e5"></div>
<div class="a" style="left:13px;top:341px;width:1877px;height:19px;background:#c0dcc0"></div>
<div class="a" style="left:13px;top:360px;width:1877px;height:1px;background:#f0f0f0"></div>
<div class="cell" style="left:13px;top:342px;width:42px;text-align:right;letter-spacing:-0.67px">3895</div>
<div class="cell" style="left:62px;top:342px;width:345px;letter-spacing:-0.5px">ABMIX SP COMERCIAL LTDA</div>
<div class="cell" style="left:522px;top:342px;width:52px;letter-spacing:-0.67px">72997</div>
<div class="cell" style="left:751px;top:342px;width:72px;letter-spacing:-0.14px">28/08/2024</div>
<div class="cell" style="left:827px;top:342px;width:72px;letter-spacing:-0.14px">29/08/2024</div>
<div class="cell" style="left:903px;top:342px;width:92px;letter-spacing:-0.14px">30/08/2024</div>
<div class="cell" style="left:999px;top:342px;width:32px;letter-spacing:-0.07px">1/1</div>
<div class="cell" style="left:1032px;top:342px;width:72px;text-align:right;letter-spacing:-0.51px">6.018,34</div>
<div class="cell" style="left:1108px;top:342px;width:72px;text-align:right;letter-spacing:-0.51px">6.018,34</div>
<div class="cell" style="left:1184px;top:342px;width:72px;text-align:right;letter-spacing:-0.51px">0,00</div>
<div class="cell" style="left:1260px;top:342px;width:81px;text-align:right;letter-spacing:-0.51px">0,00</div>
<div class="a" style="left:1px;top:380px;width:12px;height:1px;background:#e5e5e5"></div>
<div class="a" style="left:13px;top:361px;width:1877px;height:19px;background:#c0dcc0"></div>
<div class="a" style="left:13px;top:380px;width:1877px;height:1px;background:#f0f0f0"></div>
<div class="cell" style="left:13px;top:362px;width:42px;text-align:right;letter-spacing:-0.67px">3895</div>
<div class="cell" style="left:62px;top:362px;width:345px;letter-spacing:-0.5px">ABMIX SP COMERCIAL LTDA</div>
<div class="cell" style="left:522px;top:362px;width:52px;letter-spacing:-0.67px">73060</div>
<div class="cell" style="left:751px;top:362px;width:72px;letter-spacing:-0.14px">31/08/2024</div>
<div class="cell" style="left:827px;top:362px;width:72px;letter-spacing:-0.14px">01/09/2024</div>
<div class="cell" style="left:903px;top:362px;width:92px;letter-spacing:-0.14px">04/09/2024</div>
<div class="cell" style="left:999px;top:362px;width:32px;letter-spacing:-0.07px">1/1</div>
<div class="cell" style="left:1032px;top:362px;width:72px;text-align:right;letter-spacing:-0.51px">5.680,98</div>
<div class="cell" style="left:1108px;top:362px;width:72px;text-align:right;letter-spacing:-0.51px">5.680,98</div>
<div class="cell" style="left:1184px;top:362px;width:72px;text-align:right;letter-spacing:-0.51px">0,00</div>
<div class="cell" style="left:1260px;top:362px;width:81px;text-align:right;letter-spacing:-0.51px">0,00</div>
<div class="cell" style="left:1348px;top:362px;width:137px;letter-spacing:-0.07px">Depósito</div>
<div class="cell" style="left:1489px;top:362px;width:147px;letter-spacing:-0.07px">Banco Bradesco S/A</div>
<div class="cell" style="left:1640px;top:362px;width:250px;letter-spacing:-0.07px">73060/ ABMIX</div>
<div class="a" style="left:1px;top:400px;width:12px;height:1px;background:#e5e5e5"></div>
<div class="a" style="left:13px;top:381px;width:1877px;height:19px;background:#c0dcc0"></div>
<div class="a" style="left:13px;top:400px;width:1877px;height:1px;background:#f0f0f0"></div>
<div class="cell" style="left:13px;top:382px;width:42px;text-align:right;letter-spacing:-0.67px">3895</div>
<div class="cell" style="left:62px;top:382px;width:345px;letter-spacing:-0.5px">ABMIX SP COMERCIAL LTDA</div>
<div class="cell" style="left:522px;top:382px;width:52px;letter-spacing:-0.67px">73191</div>
<div class="cell" style="left:751px;top:382px;width:72px;letter-spacing:-0.14px">04/09/2024</div>
<div class="cell" style="left:827px;top:382px;width:72px;letter-spacing:-0.14px">05/09/2024</div>
<div class="cell" style="left:903px;top:382px;width:92px;letter-spacing:-0.14px">05/09/2024</div>
<div class="cell" style="left:999px;top:382px;width:32px;letter-spacing:-0.07px">1/1</div>
<div class="cell" style="left:1032px;top:382px;width:72px;text-align:right;letter-spacing:-0.51px">3.408,58</div>
<div class="cell" style="left:1108px;top:382px;width:72px;text-align:right;letter-spacing:-0.51px">3.408,58</div>
<div class="cell" style="left:1184px;top:382px;width:72px;text-align:right;letter-spacing:-0.51px">0,00</div>
<div class="cell" style="left:1260px;top:382px;width:81px;text-align:right;letter-spacing:-0.51px">0,00</div>
<div class="cell" style="left:1348px;top:382px;width:137px;letter-spacing:-0.07px">Depósito</div>
<div class="cell" style="left:1489px;top:382px;width:147px;letter-spacing:-0.07px">Banco Bradesco S/A</div>
<div class="cell" style="left:1640px;top:382px;width:250px;letter-spacing:-0.07px">73191/ ABMIX</div>
<div class="a" style="left:1px;top:420px;width:12px;height:1px;background:#e5e5e5"></div>
<div class="a" style="left:13px;top:401px;width:1877px;height:19px;background:#c0dcc0"></div>
<div class="a" style="left:13px;top:420px;width:1877px;height:1px;background:#f0f0f0"></div>
<div class="cell" style="left:13px;top:402px;width:42px;text-align:right;letter-spacing:-0.67px">3895</div>
<div class="cell" style="left:62px;top:402px;width:345px;letter-spacing:-0.5px">ABMIX SP COMERCIAL LTDA</div>
<div class="cell" style="left:522px;top:402px;width:52px;letter-spacing:-0.67px">73298</div>
<div class="cell" style="left:751px;top:402px;width:72px;letter-spacing:-0.14px">07/09/2024</div>
<div class="cell" style="left:827px;top:402px;width:72px;letter-spacing:-0.14px">08/09/2024</div>
<div class="cell" style="left:903px;top:402px;width:92px;letter-spacing:-0.14px">11/09/2024</div>
<div class="cell" style="left:999px;top:402px;width:32px;letter-spacing:-0.07px">1/1</div>
<div class="cell" style="left:1032px;top:402px;width:72px;text-align:right;letter-spacing:-0.51px">6.132,62</div>
<div class="cell" style="left:1108px;top:402px;width:72px;text-align:right;letter-spacing:-0.51px">6.132,62</div>
<div class="cell" style="left:1184px;top:402px;width:72px;text-align:right;letter-spacing:-0.51px">0,00</div>
<div class="cell" style="left:1260px;top:402px;width:81px;text-align:right;letter-spacing:-0.51px">0,00</div>
<div class="cell" style="left:1348px;top:402px;width:137px;letter-spacing:-0.07px">Depósito</div>
<div class="cell" style="left:1489px;top:402px;width:147px;letter-spacing:-0.07px">Banco Bradesco S/A</div>
<div class="cell" style="left:1640px;top:402px;width:250px;letter-spacing:-0.07px">73298/ ABMIX</div>
<div class="a" style="left:1px;top:440px;width:12px;height:1px;background:#e5e5e5"></div>
<div class="a" style="left:13px;top:421px;width:1877px;height:19px;background:#c0dcc0"></div>
<div class="a" style="left:13px;top:440px;width:1877px;height:1px;background:#f0f0f0"></div>
<div class="cell" style="left:13px;top:422px;width:42px;text-align:right;letter-spacing:-0.67px">3895</div>
<div class="cell" style="left:62px;top:422px;width:345px;letter-spacing:-0.5px">ABMIX SP COMERCIAL LTDA</div>
<div class="cell" style="left:522px;top:422px;width:52px;letter-spacing:-0.67px">73400</div>
<div class="cell" style="left:751px;top:422px;width:72px;letter-spacing:-0.14px">11/09/2024</div>
<div class="cell" style="left:827px;top:422px;width:72px;letter-spacing:-0.14px">12/09/2024</div>
<div class="cell" style="left:903px;top:422px;width:92px;letter-spacing:-0.14px">13/09/2024</div>
<div class="cell" style="left:999px;top:422px;width:32px;letter-spacing:-0.07px">1/1</div>
<div class="cell" style="left:1032px;top:422px;width:72px;text-align:right;letter-spacing:-0.51px">5.736,64</div>
<div class="cell" style="left:1108px;top:422px;width:72px;text-align:right;letter-spacing:-0.51px">5.736,64</div>
<div class="cell" style="left:1184px;top:422px;width:72px;text-align:right;letter-spacing:-0.51px">0,00</div>
<div class="cell" style="left:1260px;top:422px;width:81px;text-align:right;letter-spacing:-0.51px">0,00</div>
<div class="cell" style="left:1348px;top:422px;width:137px;letter-spacing:-0.07px">Depósito</div>
<div class="cell" style="left:1489px;top:422px;width:147px;letter-spacing:-0.07px">Banco Bradesco S/A</div>
<div class="cell" style="left:1640px;top:422px;width:250px;letter-spacing:-0.07px">73400/ ABMIX</div>
<div class="a" style="left:1px;top:460px;width:12px;height:1px;background:#e5e5e5"></div>
<div class="a" style="left:13px;top:441px;width:1877px;height:19px;background:#c0dcc0"></div>
<div class="a" style="left:13px;top:460px;width:1877px;height:1px;background:#f0f0f0"></div>
<div class="cell" style="left:13px;top:442px;width:42px;text-align:right;letter-spacing:-0.67px">3895</div>
<div class="cell" style="left:62px;top:442px;width:345px;letter-spacing:-0.5px">ABMIX SP COMERCIAL LTDA</div>
<div class="cell" style="left:522px;top:442px;width:52px;letter-spacing:-0.67px">73480</div>
<div class="cell" style="left:751px;top:442px;width:72px;letter-spacing:-0.14px">14/09/2024</div>
<div class="cell" style="left:827px;top:442px;width:72px;letter-spacing:-0.14px">15/09/2024</div>
<div class="cell" style="left:903px;top:442px;width:92px;letter-spacing:-0.14px">18/09/2024</div>
<div class="cell" style="left:999px;top:442px;width:32px;letter-spacing:-0.07px">1/1</div>
<div class="cell" style="left:1032px;top:442px;width:72px;text-align:right;letter-spacing:-0.51px">8.660,61</div>
<div class="cell" style="left:1108px;top:442px;width:72px;text-align:right;letter-spacing:-0.51px">8.660,61</div>
<div class="cell" style="left:1184px;top:442px;width:72px;text-align:right;letter-spacing:-0.51px">0,00</div>
<div class="cell" style="left:1260px;top:442px;width:81px;text-align:right;letter-spacing:-0.51px">0,00</div>
<div class="cell" style="left:1348px;top:442px;width:137px;letter-spacing:-0.07px">Depósito</div>
<div class="cell" style="left:1489px;top:442px;width:147px;letter-spacing:-0.07px">Banco Bradesco S/A</div>
<div class="cell" style="left:1640px;top:442px;width:250px;letter-spacing:-0.07px">73480/ ABMIX</div>
<div class="a" style="left:1px;top:480px;width:12px;height:1px;background:#e5e5e5"></div>
<div class="a" style="left:13px;top:461px;width:1877px;height:19px;background:#c0dcc0"></div>
<div class="a" style="left:13px;top:480px;width:1877px;height:1px;background:#f0f0f0"></div>
<div class="cell" style="left:13px;top:462px;width:42px;text-align:right;letter-spacing:-0.67px">3895</div>
<div class="cell" style="left:62px;top:462px;width:345px;letter-spacing:-0.5px">ABMIX SP COMERCIAL LTDA</div>
<div class="cell" style="left:522px;top:462px;width:52px;letter-spacing:-0.67px">73586</div>
<div class="cell" style="left:751px;top:462px;width:72px;letter-spacing:-0.14px">18/09/2024</div>
<div class="cell" style="left:827px;top:462px;width:72px;letter-spacing:-0.14px">19/09/2024</div>
<div class="cell" style="left:903px;top:462px;width:92px;letter-spacing:-0.14px">23/09/2024</div>
<div class="cell" style="left:999px;top:462px;width:32px;letter-spacing:-0.07px">1/1</div>
<div class="cell" style="left:1032px;top:462px;width:72px;text-align:right;letter-spacing:-0.51px">3.873,51</div>
<div class="cell" style="left:1108px;top:462px;width:72px;text-align:right;letter-spacing:-0.51px">3.873,51</div>
<div class="cell" style="left:1184px;top:462px;width:72px;text-align:right;letter-spacing:-0.51px">0,00</div>
<div class="cell" style="left:1260px;top:462px;width:81px;text-align:right;letter-spacing:-0.51px">0,00</div>
<div class="cell" style="left:1348px;top:462px;width:137px;letter-spacing:-0.07px">Depósito</div>
<div class="cell" style="left:1489px;top:462px;width:147px;letter-spacing:-0.07px">Banco Bradesco S/A</div>
<div class="cell" style="left:1640px;top:462px;width:250px;letter-spacing:-0.07px">73586/ ABMIX</div>
<div class="a" style="left:1px;top:500px;width:12px;height:1px;background:#e5e5e5"></div>
<div class="a" style="left:13px;top:481px;width:1877px;height:19px;background:#ffa07a"></div>
<div class="a" style="left:13px;top:500px;width:1877px;height:1px;background:#f0f0f0"></div>
<div class="cell" style="left:13px;top:482px;width:42px;text-align:right;letter-spacing:-0.67px">3895</div>
<div class="cell" style="left:62px;top:482px;width:345px;letter-spacing:-0.5px">ABMIX SP COMERCIAL LTDA</div>
<div class="cell" style="left:522px;top:482px;width:52px;letter-spacing:-0.67px">73681</div>
<div class="cell" style="left:751px;top:482px;width:72px;letter-spacing:-0.14px">21/09/2024</div>
<div class="cell" style="left:827px;top:482px;width:72px;letter-spacing:-0.14px">22/09/2024</div>
<div class="cell" style="left:999px;top:482px;width:32px;letter-spacing:-0.07px">1/1</div>
<div class="cell" style="left:1032px;top:482px;width:72px;text-align:right;letter-spacing:-0.51px">6.796,50</div>
<div class="cell" style="left:1108px;top:482px;width:72px;text-align:right;letter-spacing:-0.51px">0,00</div>
<div class="cell" style="left:1184px;top:482px;width:72px;text-align:right;letter-spacing:-0.51px">6.796,50</div>
<div class="a" style="left:1px;top:520px;width:12px;height:1px;background:#e5e5e5"></div>
<div class="a" style="left:13px;top:501px;width:1877px;height:19px;background:#c0dcc0"></div>
<div class="a" style="left:13px;top:520px;width:1877px;height:1px;background:#f0f0f0"></div>
<div class="cell" style="left:13px;top:502px;width:42px;text-align:right;letter-spacing:-0.67px">2594</div>
<div class="cell" style="left:62px;top:502px;width:345px;letter-spacing:-0.5px">ADEMIR CORSETTI</div>
<div class="cell" style="left:522px;top:502px;width:52px;letter-spacing:-0.67px">72226</div>
<div class="cell" style="left:751px;top:502px;width:72px;letter-spacing:-0.14px">01/08/2024</div>
<div class="cell" style="left:827px;top:502px;width:72px;letter-spacing:-0.14px">02/08/2024</div>
<div class="cell" style="left:903px;top:502px;width:92px;letter-spacing:-0.14px">08/08/2024</div>
<div class="cell" style="left:999px;top:502px;width:32px;letter-spacing:-0.07px">1/1</div>
<div class="cell" style="left:1032px;top:502px;width:72px;text-align:right;letter-spacing:-0.51px">8.967,90</div>
<div class="cell" style="left:1108px;top:502px;width:72px;text-align:right;letter-spacing:-0.51px">8.967,90</div>
<div class="cell" style="left:1184px;top:502px;width:72px;text-align:right;letter-spacing:-0.51px">0,00</div>
<div class="cell" style="left:1260px;top:502px;width:81px;text-align:right;letter-spacing:-0.51px">0,00</div>
<div class="a" style="left:1px;top:540px;width:12px;height:1px;background:#e5e5e5"></div>
<div class="a" style="left:13px;top:521px;width:1877px;height:19px;background:#c0dcc0"></div>
<div class="a" style="left:13px;top:540px;width:1877px;height:1px;background:#f0f0f0"></div>
<div class="cell" style="left:13px;top:522px;width:42px;text-align:right;letter-spacing:-0.67px">2594</div>
<div class="cell" style="left:62px;top:522px;width:345px;letter-spacing:-0.5px">ADEMIR CORSETTI</div>
<div class="cell" style="left:522px;top:522px;width:52px;letter-spacing:-0.67px">72336</div>
<div class="cell" style="left:751px;top:522px;width:72px;letter-spacing:-0.14px">05/08/2024</div>
<div class="cell" style="left:827px;top:522px;width:72px;letter-spacing:-0.14px">06/08/2024</div>
<div class="cell" style="left:903px;top:522px;width:92px;letter-spacing:-0.14px">12/08/2024</div>
<div class="cell" style="left:999px;top:522px;width:32px;letter-spacing:-0.07px">1/1</div>
<div class="cell" style="left:1032px;top:522px;width:72px;text-align:right;letter-spacing:-0.51px">9.445,25</div>
<div class="cell" style="left:1108px;top:522px;width:72px;text-align:right;letter-spacing:-0.51px">9.445,25</div>
<div class="cell" style="left:1184px;top:522px;width:72px;text-align:right;letter-spacing:-0.51px">0,00</div>
<div class="cell" style="left:1260px;top:522px;width:81px;text-align:right;letter-spacing:-0.51px">0,00</div>
<div class="a" style="left:1px;top:560px;width:12px;height:1px;background:#e5e5e5"></div>
<div class="a" style="left:13px;top:541px;width:1877px;height:19px;background:#c0dcc0"></div>
<div class="a" style="left:13px;top:560px;width:1877px;height:1px;background:#f0f0f0"></div>
<div class="cell" style="left:13px;top:542px;width:42px;text-align:right;letter-spacing:-0.67px">2594</div>
<div class="cell" style="left:62px;top:542px;width:345px;letter-spacing:-0.5px">ADEMIR CORSETTI</div>
<div class="cell" style="left:522px;top:542px;width:52px;letter-spacing:-0.67px">72447</div>
<div class="cell" style="left:751px;top:542px;width:72px;letter-spacing:-0.14px">08/08/2024</div>
<div class="cell" style="left:827px;top:542px;width:72px;letter-spacing:-0.14px">09/08/2024</div>
<div class="cell" style="left:903px;top:542px;width:92px;letter-spacing:-0.14px">15/08/2024</div>
<div class="cell" style="left:999px;top:542px;width:32px;letter-spacing:-0.07px">1/1</div>
<div class="cell" style="left:1032px;top:542px;width:72px;text-align:right;letter-spacing:-0.51px">7.889,25</div>
<div class="cell" style="left:1108px;top:542px;width:72px;text-align:right;letter-spacing:-0.51px">7.889,25</div>
<div class="cell" style="left:1184px;top:542px;width:72px;text-align:right;letter-spacing:-0.51px">0,00</div>
<div class="cell" style="left:1260px;top:542px;width:81px;text-align:right;letter-spacing:-0.51px">0,00</div>
<div class="a" style="left:1px;top:580px;width:12px;height:1px;background:#e5e5e5"></div>
<div class="a" style="left:13px;top:561px;width:1877px;height:19px;background:#c0dcc0"></div>
<div class="a" style="left:13px;top:580px;width:1877px;height:1px;background:#f0f0f0"></div>
<div class="cell" style="left:13px;top:562px;width:42px;text-align:right;letter-spacing:-0.67px">2594</div>
<div class="cell" style="left:62px;top:562px;width:345px;letter-spacing:-0.5px">ADEMIR CORSETTI</div>
<div class="cell" style="left:522px;top:562px;width:52px;letter-spacing:-0.67px">72553</div>
<div class="cell" style="left:751px;top:562px;width:72px;letter-spacing:-0.14px">12/08/2024</div>
<div class="cell" style="left:827px;top:562px;width:72px;letter-spacing:-0.14px">13/08/2024</div>
<div class="cell" style="left:903px;top:562px;width:92px;letter-spacing:-0.14px">19/08/2024</div>
<div class="cell" style="left:999px;top:562px;width:32px;letter-spacing:-0.07px">1/1</div>
<div class="cell" style="left:1032px;top:562px;width:72px;text-align:right;letter-spacing:-0.51px">8.711,25</div>
<div class="cell" style="left:1108px;top:562px;width:72px;text-align:right;letter-spacing:-0.51px">8.711,25</div>
<div class="cell" style="left:1184px;top:562px;width:72px;text-align:right;letter-spacing:-0.51px">0,00</div>
<div class="cell" style="left:1260px;top:562px;width:81px;text-align:right;letter-spacing:-0.51px">0,00</div>
<div class="a" style="left:1px;top:600px;width:12px;height:1px;background:#e5e5e5"></div>
<div class="a" style="left:13px;top:581px;width:1877px;height:19px;background:#c0dcc0"></div>
<div class="a" style="left:13px;top:600px;width:1877px;height:1px;background:#f0f0f0"></div>
<div class="cell" style="left:13px;top:582px;width:42px;text-align:right;letter-spacing:-0.67px">2594</div>
<div class="cell" style="left:62px;top:582px;width:345px;letter-spacing:-0.5px">ADEMIR CORSETTI</div>
<div class="cell" style="left:522px;top:582px;width:52px;letter-spacing:-0.67px">72658</div>
<div class="cell" style="left:751px;top:582px;width:72px;letter-spacing:-0.14px">15/08/2024</div>
<div class="cell" style="left:827px;top:582px;width:72px;letter-spacing:-0.14px">16/08/2024</div>
<div class="cell" style="left:903px;top:582px;width:92px;letter-spacing:-0.14px">21/08/2024</div>
<div class="cell" style="left:999px;top:582px;width:32px;letter-spacing:-0.07px">1/1</div>
<div class="cell" style="left:1032px;top:582px;width:72px;text-align:right;letter-spacing:-0.51px">9.356,25</div>
<div class="cell" style="left:1108px;top:582px;width:72px;text-align:right;letter-spacing:-0.51px">9.356,25</div>
<div class="cell" style="left:1184px;top:582px;width:72px;text-align:right;letter-spacing:-0.51px">0,00</div>
<div class="cell" style="left:1260px;top:582px;width:81px;text-align:right;letter-spacing:-0.51px">0,00</div>
<div class="a" style="left:1px;top:620px;width:12px;height:1px;background:#e5e5e5"></div>
<div class="a" style="left:13px;top:601px;width:1877px;height:19px;background:#c0dcc0"></div>
<div class="a" style="left:13px;top:620px;width:1877px;height:1px;background:#f0f0f0"></div>
<div class="cell" style="left:13px;top:602px;width:42px;text-align:right;letter-spacing:-0.67px">2594</div>
<div class="cell" style="left:62px;top:602px;width:345px;letter-spacing:-0.5px">ADEMIR CORSETTI</div>
<div class="cell" style="left:522px;top:602px;width:52px;letter-spacing:-0.67px">72747</div>
<div class="cell" style="left:751px;top:602px;width:72px;letter-spacing:-0.14px">19/08/2024</div>
<div class="cell" style="left:827px;top:602px;width:72px;letter-spacing:-0.14px">20/08/2024</div>
<div class="cell" style="left:903px;top:602px;width:92px;letter-spacing:-0.14px">26/08/2024</div>
<div class="cell" style="left:999px;top:602px;width:32px;letter-spacing:-0.07px">1/1</div>
<div class="cell" style="left:1032px;top:602px;width:72px;text-align:right;letter-spacing:-0.51px">8.782,25</div>
<div class="cell" style="left:1108px;top:602px;width:72px;text-align:right;letter-spacing:-0.51px">8.782,25</div>
<div class="cell" style="left:1184px;top:602px;width:72px;text-align:right;letter-spacing:-0.51px">0,00</div>
<div class="cell" style="left:1260px;top:602px;width:81px;text-align:right;letter-spacing:-0.51px">0,00</div>
<div class="a" style="left:1px;top:640px;width:12px;height:1px;background:#e5e5e5"></div>
<div class="a" style="left:13px;top:621px;width:1877px;height:19px;background:#c0dcc0"></div>
<div class="a" style="left:13px;top:640px;width:1877px;height:1px;background:#f0f0f0"></div>
<div class="cell" style="left:13px;top:622px;width:42px;text-align:right;letter-spacing:-0.67px">2594</div>
<div class="cell" style="left:62px;top:622px;width:345px;letter-spacing:-0.5px">ADEMIR CORSETTI</div>
<div class="cell" style="left:522px;top:622px;width:52px;letter-spacing:-0.67px">72847</div>
<div class="cell" style="left:751px;top:622px;width:72px;letter-spacing:-0.14px">22/08/2024</div>
<div class="cell" style="left:827px;top:622px;width:72px;letter-spacing:-0.14px">23/08/2024</div>
<div class="cell" style="left:903px;top:622px;width:92px;letter-spacing:-0.14px">28/08/2024</div>
<div class="cell" style="left:999px;top:622px;width:32px;letter-spacing:-0.07px">1/1</div>
<div class="cell" style="left:1032px;top:622px;width:72px;text-align:right;letter-spacing:-0.51px">7.965,25</div>
<div class="cell" style="left:1108px;top:622px;width:72px;text-align:right;letter-spacing:-0.51px">7.965,25</div>
<div class="cell" style="left:1184px;top:622px;width:72px;text-align:right;letter-spacing:-0.51px">0,00</div>
<div class="cell" style="left:1260px;top:622px;width:81px;text-align:right;letter-spacing:-0.51px">0,00</div>
<div class="a" style="left:1px;top:660px;width:12px;height:1px;background:#e5e5e5"></div>
<div class="a" style="left:13px;top:641px;width:1877px;height:19px;background:#c0dcc0"></div>
<div class="a" style="left:13px;top:660px;width:1877px;height:1px;background:#f0f0f0"></div>
<div class="cell" style="left:13px;top:642px;width:42px;text-align:right;letter-spacing:-0.67px">2594</div>
<div class="cell" style="left:62px;top:642px;width:345px;letter-spacing:-0.5px">ADEMIR CORSETTI</div>
<div class="cell" style="left:522px;top:642px;width:52px;letter-spacing:-0.67px">72938</div>
<div class="cell" style="left:751px;top:642px;width:72px;letter-spacing:-0.14px">26/08/2024</div>
<div class="cell" style="left:827px;top:642px;width:72px;letter-spacing:-0.14px">27/08/2024</div>
<div class="cell" style="left:903px;top:642px;width:92px;letter-spacing:-0.14px">02/09/2024</div>
<div class="cell" style="left:999px;top:642px;width:32px;letter-spacing:-0.07px">1/1</div>
<div class="cell" style="left:1032px;top:642px;width:72px;text-align:right;letter-spacing:-0.51px">8.817,25</div>
<div class="cell" style="left:1108px;top:642px;width:72px;text-align:right;letter-spacing:-0.51px">8.817,25</div>
<div class="cell" style="left:1184px;top:642px;width:72px;text-align:right;letter-spacing:-0.51px">0,00</div>
<div class="cell" style="left:1260px;top:642px;width:81px;text-align:right;letter-spacing:-0.51px">0,00</div>
<div class="a" style="left:58px;top:21px;width:1px;height:640px;background:#f0f0f0"></div>
<div class="a" style="left:407px;top:21px;width:1px;height:640px;background:#f0f0f0"></div>
<div class="a" style="left:518px;top:21px;width:1px;height:640px;background:#f0f0f0"></div>
<div class="a" style="left:574px;top:21px;width:1px;height:640px;background:#f0f0f0"></div>
<div class="a" style="left:645px;top:21px;width:1px;height:640px;background:#f0f0f0"></div>
<div class="a" style="left:716px;top:21px;width:1px;height:640px;background:#f0f0f0"></div>
<div class="a" style="left:747px;top:21px;width:1px;height:640px;background:#f0f0f0"></div>
<div class="a" style="left:823px;top:21px;width:1px;height:640px;background:#f0f0f0"></div>
<div class="a" style="left:899px;top:21px;width:1px;height:640px;background:#f0f0f0"></div>
<div class="a" style="left:995px;top:21px;width:1px;height:640px;background:#f0f0f0"></div>
<div class="a" style="left:1031px;top:21px;width:1px;height:640px;background:#f0f0f0"></div>
<div class="a" style="left:1107px;top:21px;width:1px;height:640px;background:#f0f0f0"></div>
<div class="a" style="left:1183px;top:21px;width:1px;height:640px;background:#f0f0f0"></div>
<div class="a" style="left:1259px;top:21px;width:1px;height:640px;background:#f0f0f0"></div>
<div class="a" style="left:1344px;top:21px;width:1px;height:640px;background:#f0f0f0"></div>
<div class="a" style="left:1485px;top:21px;width:1px;height:640px;background:#f0f0f0"></div>
<div class="a" style="left:1636px;top:21px;width:1px;height:640px;background:#f0f0f0"></div>
<svg class="a" style="left:4px;top:105px" width="7" height="11" viewBox="0 0 7 11"><path d="M0 0 L6.2 5.5 L0 11 Z" fill="#000"/></svg>
<div class="a" style="left:12px;top:21px;width:1px;height:640px;background:#e8eaec"></div>
<div class="a" style="left:1891px;top:1px;width:16px;height:665px;background:#f0f0f0"></div>
<div class="a" style="left:1891px;top:307px;width:16px;height:154px;background:#cdcdcd"></div>
<svg class="a" style="left:1894px;top:6px" width="10" height="9" viewBox="0 0 10 9"><path d="M1.3 7 L4.6 2.6 L7.9 7" fill="none" stroke="#505050" stroke-width="1.9"/></svg>
<svg class="a" style="left:1894px;top:654px" width="10" height="9" viewBox="0 0 10 9"><path d="M1.3 1.5 L4.6 6 L7.9 1.5" fill="none" stroke="#505050" stroke-width="1.9"/></svg>
</div>
<div class="gb" style="left:5px;top:890px;width:180px;height:145px"></div>
<div class="gl" style="left:12px;top:885px;font-size:12px;letter-spacing:-0.25px;padding-right:3px">Legenda:</div>
<div class="a" style="left:20px;top:909px;width:15px;height:15px;border-radius:50%;border:1px solid #1e1e1e;background:#c0dcc0"></div>
<div class="t" style="left:42px;top:911px;font-size:13px;font-weight:bold;letter-spacing:-0.1px">Pagos</div>
<div class="a" style="left:20px;top:941px;width:15px;height:15px;border-radius:50%;border:1px solid #1e1e1e;background:#f0e68c"></div>
<div class="t" style="left:43px;top:943px;font-size:13px;font-weight:bold;letter-spacing:-0.1px">À Vencer</div>
<div class="a" style="left:19px;top:973px;width:15px;height:15px;border-radius:50%;border:1px solid #1e1e1e;background:#ffa07a"></div>
<div class="t" style="left:44px;top:975px;font-size:13px;font-weight:bold;letter-spacing:-0.1px">Vencidos</div>
<div class="a" style="left:19px;top:1005px;width:15px;height:15px;border-radius:50%;border:1px solid #1e1e1e;background:#a4bcd8"></div>
<div class="t" style="left:44px;top:1007px;font-size:13px;font-weight:bold;letter-spacing:-0.1px">Quitado sem pgto.</div>
<div class="gb" style="left:191px;top:890px;width:209px;height:145px"></div>
<div class="gl" style="left:198px;top:885px;font-size:12px;letter-spacing:-0.2px;padding-right:4px">Totais:</div>
<div class="t" style="left:150px;width:100px;text-align:right;top:912px;font-size:12px;font-weight:bold;letter-spacing:-0.3px">Valor:</div>
<div class="t" style="left:290px;width:100px;text-align:right;top:912px;font-size:13px;font-weight:bold;letter-spacing:-0.4px">24.968.477,49</div>
<div class="t" style="left:150px;width:100px;text-align:right;top:944px;font-size:12px;font-weight:bold;letter-spacing:-0.3px">Quitado:</div>
<div class="t" style="left:290px;width:100px;text-align:right;top:944px;font-size:13px;font-weight:bold;letter-spacing:-0.4px">20.258.331,92</div>
<div class="t" style="left:150px;width:100px;text-align:right;top:976px;font-size:12px;font-weight:bold;letter-spacing:-0.3px">Saldo:</div>
<div class="t" style="left:290px;width:100px;text-align:right;top:976px;font-size:13px;font-weight:bold;letter-spacing:-0.4px">4.710.145,57</div>
<div class="t" style="left:150px;width:100px;text-align:right;top:1008px;font-size:12px;font-weight:bold;letter-spacing:-0.3px">Desconto:</div>
<div class="t" style="left:290px;width:100px;text-align:right;top:1008px;font-size:13px;font-weight:bold;letter-spacing:-0.4px">55.722,36</div>
<div class="a" style="left:1640px;top:989px;width:135px;height:45px;border:1px solid #bcd9bc;border-radius:3px;background:linear-gradient(#f4f7fb 0%,#d8e4f2 30%,#e4ecf6 65%,#f6f9fd 100%)"></div>
<div class="a" style="left:1781px;top:989px;width:135px;height:45px;border:1px solid #bcd9bc;border-radius:3px;background:linear-gradient(#f4f7fb 0%,#d8e4f2 30%,#e4ecf6 65%,#f6f9fd 100%)"></div>
<svg class="a" style="left:1660px;top:996px" width="32" height="32" viewBox="0 0 32 32">
<defs><linearGradient id="pp" x1="0" y1="0" x2="0" y2="1"><stop offset="0" stop-color="#f4f9ff"/><stop offset="1" stop-color="#a8d0f8"/></linearGradient></defs>
<path d="M7.1 3.2 L16.9 3.2 L20 12 L10.5 12 Z" fill="url(#pp)" stroke="#7474c4" stroke-width="0.9"/>
<path d="M5 16 L9.5 13.3 L24 12.5 L26.8 16 L14 20.5 Z" fill="#ececec" stroke="#b8b8b8" stroke-width="0.6"/>
<path d="M5 16 L14 20.5 L14 26.5 L5 22 Z" fill="#f6f6f6" stroke="#9a9a9a" stroke-width="0.6"/>
<path d="M14 20.5 L26.8 16 L27.5 23 L15 26.8 L14 26.5 Z" fill="#d8d8d8" stroke="#9a9a9a" stroke-width="0.6"/>
<path d="M17 23.3 L25 21 L25.2 22.6 L17.2 25 Z" fill="#3a3a3a"/>
<path d="M18 25.5 L26 23 L27.8 23.8 L19.5 26.8 Z" fill="#e8e8e8" stroke="#aaa" stroke-width="0.5"/>
<rect x="24" y="19" width="1.6" height="1" fill="#44bb44"/>
</svg>
<div class="t" style="left:1696px;top:1004px;font-size:16px;letter-spacing:-0.2px;color:#0c0c8a"><span style="text-decoration:underline">I</span>mprimir</div>
<svg class="a" style="left:1810px;top:998px" width="24" height="24" viewBox="0 0 24 24"><path d="M8 8 L17 17.2" stroke="#8a0000" stroke-width="3.4" stroke-linecap="square"/><path d="M18 7 L8 19" stroke="#8a0000" stroke-width="3.2" stroke-linecap="square"/><path d="M6.8 8.2 L12 13.6 M7 18.5 L11.6 13.5 M13.6 10.7 L18.2 6.6" stroke="#e00000" stroke-width="0.9" fill="none"/></svg>
<div class="t" style="left:1835px;top:1004px;font-size:16px;letter-spacing:-0.1px;color:#0c0c8a"><span style="text-decoration:underline">F</span>echar</div>
</body></html>
